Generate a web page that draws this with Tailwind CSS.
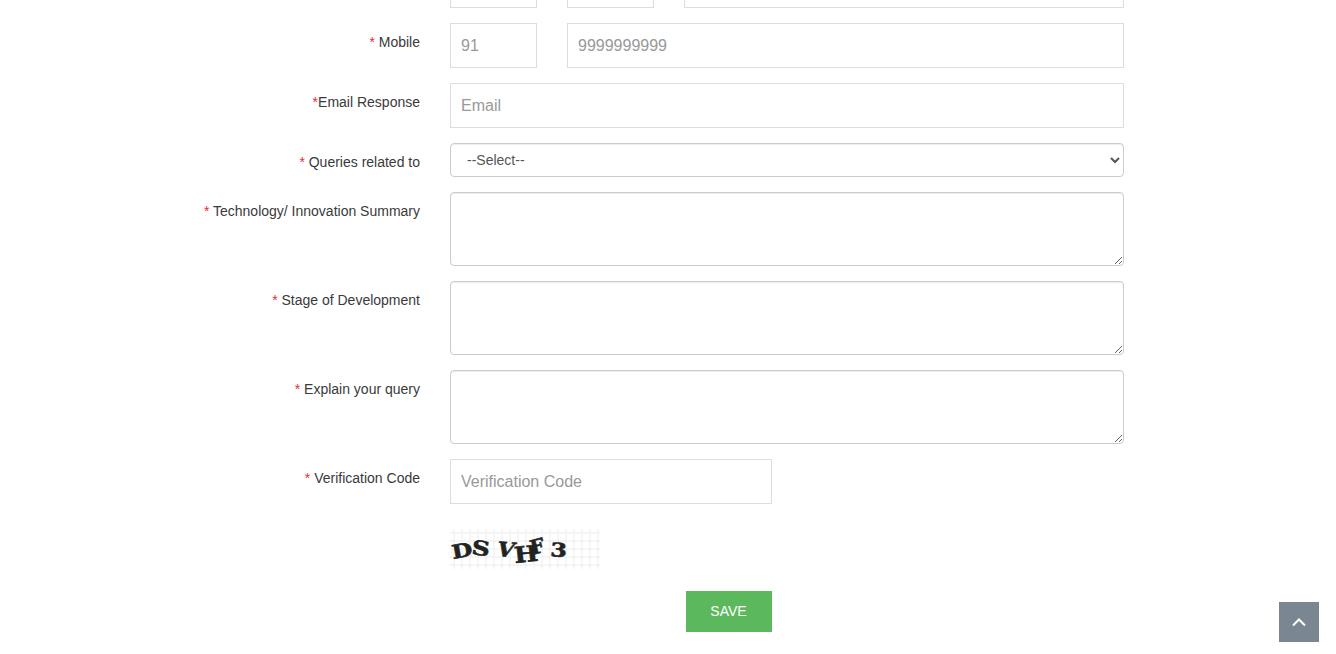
<!DOCTYPE html>
<html lang="en">
  <head>
    <meta charset="UTF-8" />
    <meta name="viewport" content="width=device-width, initial-scale=1.0" />
    <title>Enquiry Form</title>
    <script src="https://cdn.jsdelivr.net/npm/@tailwindcss/browser@4"></script>
  </head>
  <body class="bg-white h-[654px] overflow-hidden font-['Liberation_Sans',Arial,sans-serif] text-sm text-[#3a3a3a]">
    <form class="w-[1124px] flex flex-col gap-[15px]">
      <!-- row scrolled off the top of the window -->
      <div class="flex h-2 overflow-hidden">
        <div class="w-[420px] mr-[30px]"></div>
        <div class="flex gap-[30px] items-end w-[674px]">
          <div class="w-[87px] h-[45px] border border-[#ddd] shrink-0"></div>
          <div class="w-[87px] h-[45px] border border-[#ddd] shrink-0"></div>
          <div class="flex-1 h-[45px] border border-[#ddd]"></div>
        </div>
      </div>

      <div class="flex">
        <label class="w-[420px] mr-[30px] pt-[9px] leading-5 text-right"><span class="text-[#e02b3c]">*</span> Mobile</label>
        <div class="flex gap-[30px] w-[674px]">
          <input type="text" placeholder="91" class="w-[87px] h-[45px] px-2.5 border border-[#ddd] text-base placeholder:text-[#999] outline-none" />
          <input type="text" placeholder="9999999999" class="flex-1 min-w-0 h-[45px] px-2.5 border border-[#ddd] text-base placeholder:text-[#999] outline-none" />
        </div>
      </div>

      <div class="flex">
        <label class="w-[420px] mr-[30px] pt-[9px] leading-5 text-right"><span class="text-[#e02b3c]">*</span>Email Response</label>
        <input type="text" placeholder="Email" class="w-[674px] h-[45px] px-2.5 border border-[#ddd] text-base placeholder:text-[#999] outline-none" />
      </div>

      <div class="flex">
        <label class="w-[420px] mr-[30px] pt-[9px] leading-5 text-right"><span class="text-[#e02b3c]">*</span> Queries related to</label>
        <select class="w-[674px] h-[34px] pl-3 pr-1 bg-white border border-[#ccc] rounded text-sm text-[#555] outline-none shadow-[inset_0_1px_1px_rgba(0,0,0,0.075)]">
          <option>--Select--</option>
        </select>
      </div>

      <div class="flex">
        <label class="w-[420px] mr-[30px] pt-[9px] leading-5 text-right"><span class="text-[#e02b3c]">*</span> Technology/ Innovation Summary</label>
        <textarea class="block w-[674px] h-[74px] border border-[#ccc] rounded outline-none shadow-[inset_0_1px_1px_rgba(0,0,0,0.075)]"></textarea>
      </div>

      <div class="flex">
        <label class="w-[420px] mr-[30px] pt-[9px] leading-5 text-right"><span class="text-[#e02b3c]">*</span> Stage of Development</label>
        <textarea class="block w-[674px] h-[74px] border border-[#ccc] rounded outline-none shadow-[inset_0_1px_1px_rgba(0,0,0,0.075)]"></textarea>
      </div>

      <div class="flex">
        <label class="w-[420px] mr-[30px] pt-[9px] leading-5 text-right"><span class="text-[#e02b3c]">*</span> Explain your query</label>
        <textarea class="block w-[674px] h-[74px] border border-[#ccc] rounded outline-none shadow-[inset_0_1px_1px_rgba(0,0,0,0.075)]"></textarea>
      </div>

      <div class="flex">
        <label class="w-[420px] mr-[30px] pt-[9px] leading-5 text-right"><span class="text-[#e02b3c]">*</span> Verification Code</label>
        <input type="text" placeholder="Verification Code" class="w-[322px] h-[45px] px-2.5 border border-[#ddd] text-base placeholder:text-[#999] outline-none" />
      </div>

      <div class="ml-[450px] mt-2.5">
        <svg width="150" height="40" viewBox="0 0 150 40" class="block">
          <defs>
            <pattern id="captcha-grid" width="8" height="8" patternUnits="userSpaceOnUse">
              <path d="M4 0V8M0 4H8" stroke="#ececec" stroke-width="1" fill="none" />
            </pattern>
          </defs>
          <rect width="150" height="40" fill="url(#captcha-grid)" />
          <g font-family="'DejaVu Serif', serif" font-weight="700" fill="#222" stroke="#222" stroke-width="0.6">
            <text font-size="19" transform="translate(3 30) rotate(-10) scale(1.25 1)">D</text>
            <text font-size="20" transform="translate(21 25) rotate(8) scale(1.25 1)">S</text>
            <text font-size="20" font-style="italic" transform="translate(47 27) rotate(4) scale(1.1 1)">V</text>
            <text font-size="22" transform="translate(65 34) rotate(-6) scale(1.15 1)">H</text>
            <text font-size="20" transform="translate(82 26) rotate(-14)">F</text>
            <text font-size="19" transform="translate(100 27) rotate(4) scale(1.25 1)">3</text>
          </g>
        </svg>
      </div>

      <div class="ml-[686px] mt-[7px]">
        <button type="button" class="w-[86px] h-[41px] pb-0.5 pr-px bg-[#5cb85c] text-white text-sm">SAVE</button>
      </div>
    </form>

    <a href="#" class="fixed left-[1279px] top-[602px] w-10 h-10 bg-[#7a8793] flex items-center justify-center">
      <svg width="16" height="10" viewBox="0 0 16 10" fill="none" stroke="#fff" stroke-width="2">
        <path d="M2 8.5L8 2.5L14 8.5" />
      </svg>
    </a>
  </body>
</html>
